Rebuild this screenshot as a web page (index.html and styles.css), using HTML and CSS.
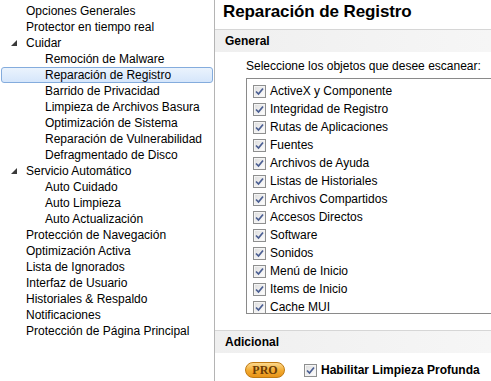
FILE: index.html
```html
<!DOCTYPE html>
<html lang="es">
<head>
  <meta charset="UTF-8" />
  <title>Reparación de Registro</title>
  <link rel="stylesheet" href="styles.css">
</head>
<body>
  <div class="window">
    <ul class="tree">
      <li class="node">Opciones Generales</li>
      <li class="node">Protector en tiempo real</li>
      <li class="node open"><svg class="arrow" width="6" height="6" viewBox="0 0 6 6"><polygon points="6,0 6,6 0,6" /></svg>Cuidar</li>
      <li class="node child">Remoción de Malware</li>
      <li class="node child selected">Reparación de Registro</li>
      <li class="node child">Barrido de Privacidad</li>
      <li class="node child">Limpieza de Archivos Basura</li>
      <li class="node child">Optimización de Sistema</li>
      <li class="node child">Reparación de Vulnerabilidad</li>
      <li class="node child">Defragmentado de Disco</li>
      <li class="node open"><svg class="arrow" width="6" height="6" viewBox="0 0 6 6"><polygon points="6,0 6,6 0,6" /></svg>Servicio Automático</li>
      <li class="node child">Auto Cuidado</li>
      <li class="node child">Auto Limpieza</li>
      <li class="node child">Auto Actualización</li>
      <li class="node">Protección de Navegación</li>
      <li class="node">Optimización Activa</li>
      <li class="node">Lista de Ignorados</li>
      <li class="node">Interfaz de Usuario</li>
      <li class="node">Historiales &amp; Respaldo</li>
      <li class="node">Notificaciones</li>
      <li class="node">Protección de Página Principal</li>
    </ul>

    <div class="panel">
      <h1 class="panel-title">Reparación de Registro</h1>

      <div class="section-head">General</div>
      <div class="section-body">
        <p class="prompt">Seleccione los objetos que desee escanear:</p>
        <ul class="check-list">
          <li><span class="check"><svg width="11" height="11" viewBox="0 0 11 11"><path d="M2 5.5 L4.5 8 L9 2.5" /></svg></span>ActiveX y Componente</li>
          <li><span class="check"><svg width="11" height="11" viewBox="0 0 11 11"><path d="M2 5.5 L4.5 8 L9 2.5" /></svg></span>Integridad de Registro</li>
          <li><span class="check"><svg width="11" height="11" viewBox="0 0 11 11"><path d="M2 5.5 L4.5 8 L9 2.5" /></svg></span>Rutas de Aplicaciones</li>
          <li><span class="check"><svg width="11" height="11" viewBox="0 0 11 11"><path d="M2 5.5 L4.5 8 L9 2.5" /></svg></span>Fuentes</li>
          <li><span class="check"><svg width="11" height="11" viewBox="0 0 11 11"><path d="M2 5.5 L4.5 8 L9 2.5" /></svg></span>Archivos de Ayuda</li>
          <li><span class="check"><svg width="11" height="11" viewBox="0 0 11 11"><path d="M2 5.5 L4.5 8 L9 2.5" /></svg></span>Listas de Historiales</li>
          <li><span class="check"><svg width="11" height="11" viewBox="0 0 11 11"><path d="M2 5.5 L4.5 8 L9 2.5" /></svg></span>Archivos Compartidos</li>
          <li><span class="check"><svg width="11" height="11" viewBox="0 0 11 11"><path d="M2 5.5 L4.5 8 L9 2.5" /></svg></span>Accesos Directos</li>
          <li><span class="check"><svg width="11" height="11" viewBox="0 0 11 11"><path d="M2 5.5 L4.5 8 L9 2.5" /></svg></span>Software</li>
          <li><span class="check"><svg width="11" height="11" viewBox="0 0 11 11"><path d="M2 5.5 L4.5 8 L9 2.5" /></svg></span>Sonidos</li>
          <li><span class="check"><svg width="11" height="11" viewBox="0 0 11 11"><path d="M2 5.5 L4.5 8 L9 2.5" /></svg></span>Menú de Inicio</li>
          <li><span class="check"><svg width="11" height="11" viewBox="0 0 11 11"><path d="M2 5.5 L4.5 8 L9 2.5" /></svg></span>Items de Inicio</li>
          <li><span class="check"><svg width="11" height="11" viewBox="0 0 11 11"><path d="M2 5.5 L4.5 8 L9 2.5" /></svg></span>Cache MUI</li>
        </ul>
      </div>

      <div class="section-head">Adicional</div>
      <div class="extra-row">
        <span class="pro-badge">PRO</span>
        <label class="deep-clean"><span class="check"><svg width="11" height="11" viewBox="0 0 11 11"><path d="M2 5.5 L4.5 8 L9 2.5" /></svg></span>Habilitar Limpieza Profunda</label>
      </div>
    </div>
  </div>
</body>
</html>
```

FILE: styles.css
```css
/* Basic Reset */
*, *:before, *:after {
  box-sizing: border-box;
  margin: 0;
  padding: 0;
}

body {
  width: 491px;
  height: 381px;
  overflow: hidden;
  background: #ffffff;
  font-family: "Liberation Sans", Arial, sans-serif;
  font-size: 12px;
  color: #000;
}

.window {
  display: flex;
  height: 100%;
}

/* Left tree */
.tree {
  list-style: none;
  width: 215px;
  flex-shrink: 0;
  padding: 3px 1px 0 1px;
  border-right: 1px solid #b4b4b4;
}

.node {
  display: flex;
  align-items: center;
  height: 16px;
  padding-left: 24px;
  border: 1px solid transparent;
  white-space: nowrap;
}

.node.open {
  padding-left: 9px;
}

.arrow {
  margin-right: 9px;
  margin-top: -1px;
  fill: #3a3a3a;
}

.node.child {
  padding-left: 43px;
}

.node.selected {
  border-color: #84acdd;
  border-radius: 3px;
  background: linear-gradient(#eaf3fd, #d5e6fb);
}

/* Right panel */
.panel {
  flex: 1;
  min-width: 0;
  overflow: hidden;
}

.panel-title {
  height: 29px;
  padding: 2px 0 0 8px;
  font-size: 17px;
  font-weight: bold;
  letter-spacing: -0.1px;
  line-height: 20px;
  white-space: nowrap;
}

.section-head {
  height: 23px;
  padding-left: 10px;
  line-height: 22px;
  font-weight: bold;
  border-top: 1px solid #d6d6d6;
  background: linear-gradient(to right, #efefef, #f6f6f6);
}

.section-body {
  padding: 6px 0 16px 31px;
}

.prompt {
  line-height: 16px;
  margin-bottom: 4px;
  white-space: nowrap;
}

.check-list {
  list-style: none;
  margin-right: -12px;
  height: 236px;
  overflow: hidden;
  padding: 3px 0 0 6px;
  border: 1px solid #8a8a8a;
}

.check-list li {
  display: flex;
  align-items: center;
  height: 18px;
  white-space: nowrap;
}

.check {
  display: inline-flex;
  align-items: center;
  justify-content: center;
  flex-shrink: 0;
  width: 13px;
  height: 13px;
  margin-right: 4px;
  border: 1px solid #8e8f8f;
  background: linear-gradient(135deg, #dcdcdc, #ffffff);
  box-shadow: inset 0 0 0 1px #f4f4f4;
}

.check path {
  fill: none;
  stroke: #4a5e92;
  stroke-width: 1.7;
}

.extra-row {
  display: flex;
  align-items: center;
  padding: 9px 0 0 30px;
}

.pro-badge {
  flex-shrink: 0;
  width: 40px;
  height: 16px;
  line-height: 14px;
  text-align: center;
  border: 1px solid #c07a12;
  border-radius: 8px;
  background: linear-gradient(#fbd88d, #f2aa30 55%, #e89418);
  color: #6a3b05;
  font-family: "Liberation Serif", "Times New Roman", serif;
  font-weight: bold;
  font-size: 12px;
}

.deep-clean {
  display: flex;
  align-items: center;
  margin-left: 19px;
  font-weight: bold;
  white-space: nowrap;
}
```
